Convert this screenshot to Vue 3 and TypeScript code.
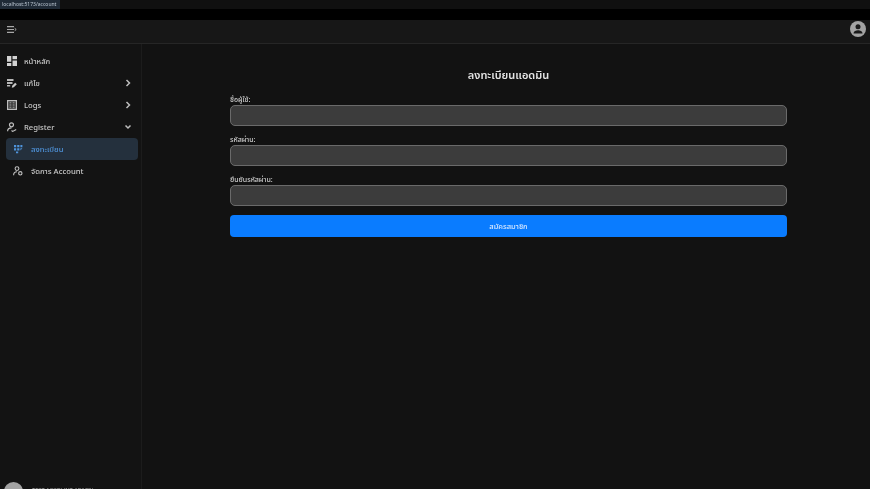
<script setup lang="ts">
interface Field { label: string; type: string }
const fields: Field[] = [
  { label: 'ชื่อผู้ใช้:', type: 'text' },
  { label: 'รหัสผ่าน:', type: 'password' },
  { label: 'ยืนยันรหัสผ่าน:', type: 'password' },
]
</script>

<template>
  <div class="page">
    <div class="tabstrip"><span class="url">localhost:5173/account</span></div>
    <div class="blackbar"></div>
    <header class="appbar">
      <svg class="menu-ic" viewBox="0 0 10 7" width="10" height="7">
        <path d="M0 .6h7M0 3.500h7M0 6.400h7" stroke="#a8a8a8" stroke-width="1.100" fill="none" />
        <path d="m7.700 2.300 1.500 1.200-1.500 1.200" stroke="#a8a8a8" stroke-width="1" fill="none" />
      </svg>
      <svg class="avatar" viewBox="0 0 16 16" width="16" height="16">
        <circle cx="8" cy="8" r="8" fill="#a3a3a3" />
        <circle cx="8" cy="5.800" r="2.500" fill="#1a1a1a" />
        <path d="M3.500 12.500c0-2.300 2.500-3.300 4.500-3.300s4.500 1 4.500 3.300z" fill="#1a1a1a" />
      </svg>
    </header>
    <div class="body">
      <aside class="sidebar">
        <nav class="nav">
          <a class="item">
            <svg class="ic" viewBox="0 0 10 10"><path d="M0 0h4.300v5.700H0zM5.500 0H10v3.300H5.500zM5.500 4.500H10V10H5.500zM0 7h4.300v3H0z" fill="#d2d2d2" /></svg>
            <span>หน้าหลัก</span>
          </a>
          <a class="item">
            <svg class="ic" viewBox="0 0 10 10"><path d="M0 1h6.500v2H0zM0 4h5.500v2H0zM0 7h3.200v1.500H0z" fill="#b8b8b8" /><path d="m4.800 9.700.4-2 3-3 1.600 1.600-3 3z" fill="#c8c8c8" /></svg>
            <span>แก้ไข</span>
            <svg class="chev" viewBox="0 0 8 8"><path d="m2.500 1 3 3-3 3" /></svg>
          </a>
          <a class="item">
            <svg class="ic" viewBox="0 0 10 10"><path d="M.6.600h8.800v8.800H.6z" fill="#3a3a3a" stroke="#bcbcbc" stroke-width="1.200" /><path d="M2.500 2.800h1.800M2.500 5h1.800M2.500 7.200h1.800M5.700 2.800h1.800M5.700 5h1.800M5.700 7.200h1.800" stroke="#bcbcbc" stroke-width=".8" /></svg>
            <span>Logs</span>
            <svg class="chev" viewBox="0 0 8 8"><path d="m2.500 1 3 3-3 3" /></svg>
          </a>
          <a class="item">
            <svg class="ic" viewBox="0 0 10 10"><circle cx="4.500" cy="2.800" r="2" fill="none" stroke="#c0c0c0" stroke-width="1.200" /><path d="M.6 9.200c0-2.400 1.800-3.400 3.900-3.400" fill="none" stroke="#c0c0c0" stroke-width="1.200" /><path d="m4.500 8.500 1.200.9 3.500-2" fill="none" stroke="#c0c0c0" stroke-width="1.100" /></svg>
            <span>Register</span>
            <svg class="chev" viewBox="0 0 8 8"><path d="m1.500 2.500 2.500 2.500 2.500-2.500" /></svg>
          </a>
          <a class="item sub active">
            <svg class="ic" viewBox="0 0 10 10"><path d="M1 1h2.200v2.200H1zM4.200 1h2.200v2.200H4.200zM7.400 1h2v2.200h-2zM1 4.200h2.200v2.200H1zM4.200 4.200h2.200v2.200H4.200zM7.400 4.200h2l-2 2.200zM3 7.400h2.200v1.800H3z" fill="#4f94dc" /></svg>
            <span>ลงทะเบียน</span>
          </a>
          <a class="item sub">
            <svg class="ic" viewBox="0 0 10 10"><circle cx="4" cy="2.600" r="1.900" fill="none" stroke="#c0c0c0" stroke-width="1.100" /><path d="M.6 9.300c0-2.300 1.500-3.500 3.400-3.500" fill="none" stroke="#c0c0c0" stroke-width="1.100" /><circle cx="7.300" cy="7.300" r="1.700" fill="none" stroke="#c0c0c0" stroke-width="1.100" /></svg>
            <span>จัดการ Account</span>
          </a>
        </nav>
        <div class="user">
          <span class="user-av"></span>
          <span class="user-name">TEST ACCOUNT ADMIN</span>
        </div>
      </aside>
      <main class="main">
        <form class="form" @submit.prevent>
          <h1>ลงทะเบียนแอดมิน</h1>
          <div v-for="f in fields" :key="f.label" class="field">
            <label>{{ f.label }}</label>
            <input :type="f.type" />
          </div>
          <button type="submit">สมัครสมาชิก</button>
        </form>
      </main>
    </div>
  </div>
</template>

<style>
html, body { margin: 0; background: #121212; overflow: hidden; }
</style>

<style scoped>
.page {
  width: 870px;
  height: 489px;
  display: flex;
  flex-direction: column;
  overflow: hidden;
  background: #121212;
  color: #e0e0e0;
  font-family: "Noto Sans", "Noto Sans Thai", Inter, "Liberation Sans", sans-serif;
  filter: blur(0.5px);
}
.tabstrip { height: 9px; flex: none; background: #101010; overflow: hidden; }
.url {
  display: block;
  width: 60px;
  height: 9px;
  background: #1f2a36;
  color: #b9c4d0;
  font-size: 5px;
  line-height: 8px;
  padding-left: 2px;
  box-sizing: border-box;
  white-space: nowrap;
  overflow: hidden;
}
.blackbar { height: 11px; flex: none; background: #000; }
.appbar {
  height: 23px;
  flex: none;
  box-sizing: content-box;
  display: flex;
  align-items: center;
  justify-content: space-between;
  padding: 0 4px 0 7px;
  background: #171717;
  border-bottom: 1px solid #262626;
}
.menu-ic { margin-top: -5px; }
.avatar { margin-top: -5px; }
.body { flex: 1; display: flex; min-height: 0; }
.sidebar {
  width: 142px;
  flex: none;
  position: relative;
  box-sizing: border-box;
  background: #131313;
  border-right: 1px solid #1c1c1c;
}
.nav { display: flex; flex-direction: column; gap: 0; padding: 6px 3px 0 7px; }
.item {
  height: 22px;
  display: flex;
  align-items: center;
  gap: 7px;
  font-size: 7.700px;
  font-weight: 500;
  color: #c8c8c8;
}
.ic { width: 10px; height: 10px; flex: none; }
.chev {
  width: 8px;
  height: 8px;
  margin-left: auto;
  margin-right: 6px;
  fill: none;
  stroke: #bdbdbd;
  stroke-width: 1.500;
}
.sub { padding-left: 7px; margin-left: -1px; margin-right: 0; gap: 8px; }
.active {
  background: #24303d;
  border-radius: 4px;
  color: #4f94dc;
}
.user {
  position: absolute;
  left: 4px;
  top: 437px;
  display: flex;
  gap: 9px;
  align-items: flex-start;
}
.user-av {
  width: 19px;
  height: 19px;
  border-radius: 50%;
  background: #a3a3a3;
  margin-top: 1px;
}
.user-name { font-size: 5.700px; color: #aaa; line-height: 8px; margin-top: 5px; white-space: nowrap; }
.main { flex: 1; min-width: 0; display: flex; justify-content: center; padding-top: 21px; background: #121212; }
.form { width: 557px; margin-left: 5px; display: flex; flex-direction: column; }
h1 {
  margin: 0 0 8px;
  font-size: 11px;
  line-height: 20px;
  font-weight: 600;
  text-align: center;
  color: #e4e4e4;
}
.field { display: flex; flex-direction: column; margin-bottom: 7px; }
label { font-size: 7px; line-height: 14px; height: 12px; color: #cfcfcf; font-weight: 500; }
input {
  height: 21px;
  box-sizing: border-box;
  background: #3c3c3c;
  border: 1px solid #6a6a6a;
  border-radius: 5px;
  outline: none;
  padding: 0 6px;
}
button {
  height: 22px;
  margin-top: 2px;
  background: #0a7cff;
  color: #d9e9ff;
  border: none;
  border-radius: 4px;
  font: inherit;
  font-size: 7.500px;
  font-weight: 500;
  padding: 0;
}
</style>
